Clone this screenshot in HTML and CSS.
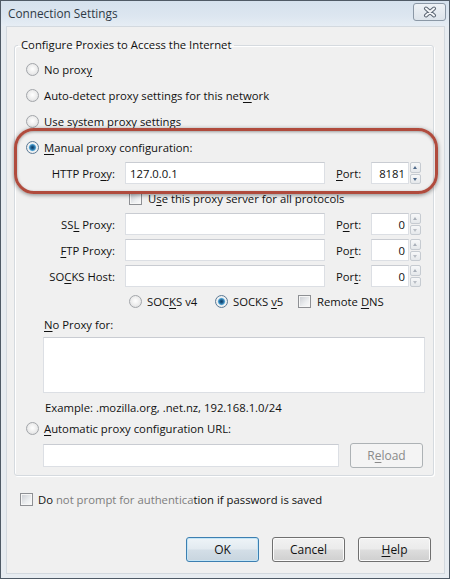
FILE: index.html
```html
<!DOCTYPE html>
<html lang="en">

<head>
    <meta charset="UTF-8" />
    <meta name="viewport" content="width=device-width, initial-scale=1.0" />
    <title>Connection Settings</title>
    <link rel="stylesheet" href="styles.css">
</head>

<body>
    <div class="window">
        <header class="titlebar">
            <span class="title">Connection Settings</span>
            <span class="close-btn">
                <svg width="18" height="12" viewBox="0 0 18 12">
                    <path d="M5 2.5 L13 9.5 M13 2.5 L5 9.5" stroke="#5b6673" stroke-width="4" stroke-linecap="round" fill="none" />
                    <path d="M5 2.5 L13 9.5 M13 2.5 L5 9.5" stroke="#f4f6f8" stroke-width="2" stroke-linecap="round" fill="none" />
                </svg>
            </span>
        </header>

        <div class="client">
            <fieldset class="group">
                <legend>Configure Proxies to Access the Internet</legend>

                <div class="option"><span class="radio"></span><span>No prox<u>y</u></span></div>
                <div class="option"><span class="radio"></span><span>Auto-detect proxy settings for this net<u>w</u>ork</span></div>
                <div class="option"><span class="radio"></span><span><u>U</u>se system proxy settings</span></div>
                <div class="option"><span class="radio checked"></span><span><u>M</u>anual proxy configuration:</span></div>

                <div class="proxy-grid">
                    <span class="field-label">HTTP Pro<u>x</u>y:</span>
                    <span class="textbox">127.0.0.1</span>
                    <span class="port-label"><u>P</u>ort:</span>
                    <span class="textbox port">8181</span>
                    <span class="spinner active"><i class="up"></i><i class="down"></i></span>

                    <div class="check-row"><span class="checkbox"></span><span>U<u>s</u>e this proxy server for all protocols</span></div>

                    <span class="field-label">SS<u>L</u> Proxy:</span>
                    <span class="textbox"></span>
                    <span class="port-label">P<u>o</u>rt:</span>
                    <span class="textbox port">0</span>
                    <span class="spinner"><i class="up"></i><i class="down"></i></span>

                    <span class="field-label"><u>F</u>TP Proxy:</span>
                    <span class="textbox"></span>
                    <span class="port-label">Po<u>r</u>t:</span>
                    <span class="textbox port">0</span>
                    <span class="spinner"><i class="up"></i><i class="down"></i></span>

                    <span class="field-label">SO<u>C</u>KS Host:</span>
                    <span class="textbox"></span>
                    <span class="port-label">Por<u>t</u>:</span>
                    <span class="textbox port">0</span>
                    <span class="spinner"><i class="up"></i><i class="down"></i></span>
                </div>

                <div class="socks-row">
                    <span class="socks-item v4"><span class="radio"></span><span>SOC<u>K</u>S v4</span></span>
                    <span class="socks-item v5"><span class="radio checked"></span><span>SOCKS <u>v</u>5</span></span>
                    <span class="socks-item"><span class="checkbox"></span><span>Remote <u>D</u>NS</span></span>
                </div>

                <div class="no-proxy">
                    <div class="caption"><u>N</u>o Proxy for:</div>
                    <div class="textarea"></div>
                    <div class="example">Example: .mozilla.org, .net.nz, 192.168.1.0/24</div>
                </div>

                <div class="option auto"><span class="radio"></span><span><u>A</u>utomatic proxy configuration URL:</span></div>

                <div class="url-row">
                    <span class="textbox url"></span>
                    <span class="btn disabled">R<u>e</u>load</span>
                </div>
            </fieldset>

            <div class="option prompt"><span class="checkbox"></span><span>Do<span class="faded"> not prompt for authentica</span>tion if password is saved</span></div>

            <div class="buttons">
                <span class="btn default">OK</span>
                <span class="btn">Cancel</span>
                <span class="btn"><u>H</u>elp</span>
            </div>
        </div>

        <!-- red annotation around the manual proxy section -->
        <div class="highlight"></div>
    </div>
</body>

</html>
```

FILE: styles.css
```css
body {
    margin: 0;
    padding: 0;
    font-family: 'Open Sans', 'Noto Sans', sans-serif;
    font-size: 11.3px;
    color: #111111;
    background: #ffffff;
}

u {
    text-decoration-thickness: 1px;
    text-underline-offset: 2px;
}

.window {
    position: relative;
    width: 450px;
    height: 579px;
    box-sizing: border-box;
    border: 1px solid #4f5a66;
    background: #e7ecf1;
    display: flex;
    flex-direction: column;
    overflow: hidden;
}

.titlebar {
    height: 25px;
    flex: none;
    display: flex;
    align-items: center;
    justify-content: space-between;
    padding: 0 3px 0 7px;
    background: linear-gradient(#d5e1ed 0%, #dce6f0 60%, #e6edf4 100%);
}

.title {
    font-size: 11.8px;
    color: #2f3a45;
    margin-top: -1px;
}

.close-btn {
    width: 33px;
    height: 18px;
    margin-top: -4px;
    box-sizing: border-box;
    border: 1px solid #8b98a6;
    border-radius: 3px;
    background: linear-gradient(#eef2f6, #dde4eb);
    display: flex;
    align-items: center;
    justify-content: center;
}

.client {
    flex: 1;
    margin: 0 4px 4px 5px;
    border: 1px solid #d3d9df;
    background: #f0f0f0;
    display: flex;
    flex-direction: column;
}

.group {
    margin: 10px 10px 0 7px;
    padding: 3px 6px 7px 10px;
    border: 1px solid #d5dadf;
    border-radius: 3px;
    box-shadow: inset 1px 1px 0 #ffffff, 1px 1px 0 #ffffff;
    min-width: 0;
}

.group legend {
    padding: 0 3px;
    margin-left: -7px;
    line-height: 16px;
    color: #111111;
}

.option {
    height: 26px;
    display: flex;
    align-items: center;
}

.radio {
    width: 13px;
    height: 13px;
    box-sizing: border-box;
    border-radius: 50%;
    border: 1px solid #a3a6aa;
    background: radial-gradient(circle at 50% 45%, #ffffff 0, #ececec 55%, #d3d5d8 100%);
    margin: 0 5px 0 1px;
    flex: none;
}

.radio.checked {
    border-color: #5b7a96;
    background: radial-gradient(circle at 50% 50%, #0f3e66 0, #1d5d8e 1.6px, #4c9ccc 3px, #a9d3ec 3.6px, #f4f4f4 4.2px, #dadcdf 100%);
}

.checkbox {
    width: 13px;
    height: 13px;
    box-sizing: border-box;
    border: 1px solid #8e9094;
    box-shadow: inset 0 0 0 1px #f6f6f6;
    background: linear-gradient(135deg, #c9ccd1 0%, #eceef0 60%, #fbfbfb 100%);
    margin-right: 6px;
    flex: none;
}

.proxy-grid {
    margin: 2px 0 0 18px;
    display: grid;
    grid-template-columns: 82px 200px 46px 38px 12px;
    grid-template-rows: 22px 21px 22px 22px 22px;
    row-gap: 4px;
    align-items: center;
}

.field-label {
    text-align: right;
    padding-right: 10px;
}

.port-label {
    padding-left: 11px;
}

.textbox {
    height: 22px;
    box-sizing: border-box;
    border: 1px solid #dcdfe4;
    border-top-color: #c9ccd2;
    background: #ffffff;
    display: flex;
    align-items: center;
    padding: 0 4px;
}

.textbox.port {
    justify-content: flex-end;
    padding-right: 3px;
}

.spinner {
    margin-left: 1px;
    height: 22px;
    display: flex;
    flex-direction: column;
    gap: 1px;
}

.spinner i {
    flex: 1;
    box-sizing: border-box;
    border: 1px solid #c6cbd1;
    border-radius: 2px;
    background: linear-gradient(#f7f8f9, #e5e8eb);
    position: relative;
}

.spinner i::after {
    content: '';
    position: absolute;
    left: 2px;
    top: 3px;
    border-left: 2.5px solid transparent;
    border-right: 2.5px solid transparent;
}

.spinner i.up::after {
    border-bottom: 3px solid #a9b0ba;
}

.spinner i.down::after {
    border-top: 3px solid #b9bec5;
}

.spinner.active i.up::after,
.spinner.active i.down::after {
    border-bottom-color: #4f6a8a;
    border-top-color: #4f6a8a;
}

.check-row {
    grid-column: 2 / span 4;
    display: flex;
    align-items: center;
    padding-left: 4px;
    height: 21px;
}

.socks-row {
    height: 20px;
    margin-top: 4px;
    padding-left: 103px;
    display: flex;
    align-items: center;
}

.socks-item {
    display: flex;
    align-items: center;
}

.socks-item.v4 {
    width: 86px;
}

.socks-item.v5 {
    width: 84px;
}

.no-proxy {
    padding-left: 18px;
}

.caption {
    margin-top: 6px;
    line-height: 16px;
    padding-left: 1px;
}

.textarea {
    margin-top: 4px;
    width: 382px;
    height: 56px;
    box-sizing: border-box;
    border: 1px solid #dcdfe4;
    border-top-color: #c9ccd2;
    background: #ffffff;
}

.example {
    margin-top: 7px;
    line-height: 16px;
    padding-left: 2px;
}

.option.auto {
    height: 20px;
    margin-top: 2px;
}

.url-row {
    margin: 5px 0 0 18px;
    display: flex;
    align-items: center;
    gap: 11px;
}

.textbox.url {
    width: 296px;
    height: 23px;
}

.btn {
    width: 73px;
    height: 25px;
    box-sizing: border-box;
    border: 1px solid #707070;
    border-radius: 3px;
    background: linear-gradient(#f2f2f2 0%, #ebebeb 48%, #dddddd 52%, #cfcfcf 100%);
    box-shadow: inset 0 0 0 1px #fbfbfb;
    display: flex;
    align-items: center;
    justify-content: center;
    color: #111111;
    font-size: 12px;
}

.btn.disabled {
    border-color: #adb2b5;
    background: #f4f4f4;
    box-shadow: none;
    color: #8a8a8a;
}

.btn.default {
    border-color: #3c7fb1;
    background: linear-gradient(#eef4f8 0%, #e2eaf0 48%, #d3dee7 52%, #c8d5df 100%);
    box-shadow: inset 0 0 0 1px #c4e5f6;
}

.option.prompt {
    height: 20px;
    margin: 13px 0 0 13px;
}

.option.prompt .checkbox {
    margin-right: 5px;
}

.faded {
    color: #7d7d7d;
}

.buttons {
    margin: 28px 13px 0 0;
    display: flex;
    justify-content: flex-end;
    gap: 13px;
}

.highlight {
    position: absolute;
    left: 13px;
    top: 127px;
    width: 424px;
    height: 66px;
    box-sizing: border-box;
    border: 3px solid #b04b3d;
    border-radius: 20px;
    box-shadow: 0 1px 4px rgba(0, 0, 0, 0.45), inset 0 1px 3px rgba(0, 0, 0, 0.35);
    pointer-events: none;
}
```
